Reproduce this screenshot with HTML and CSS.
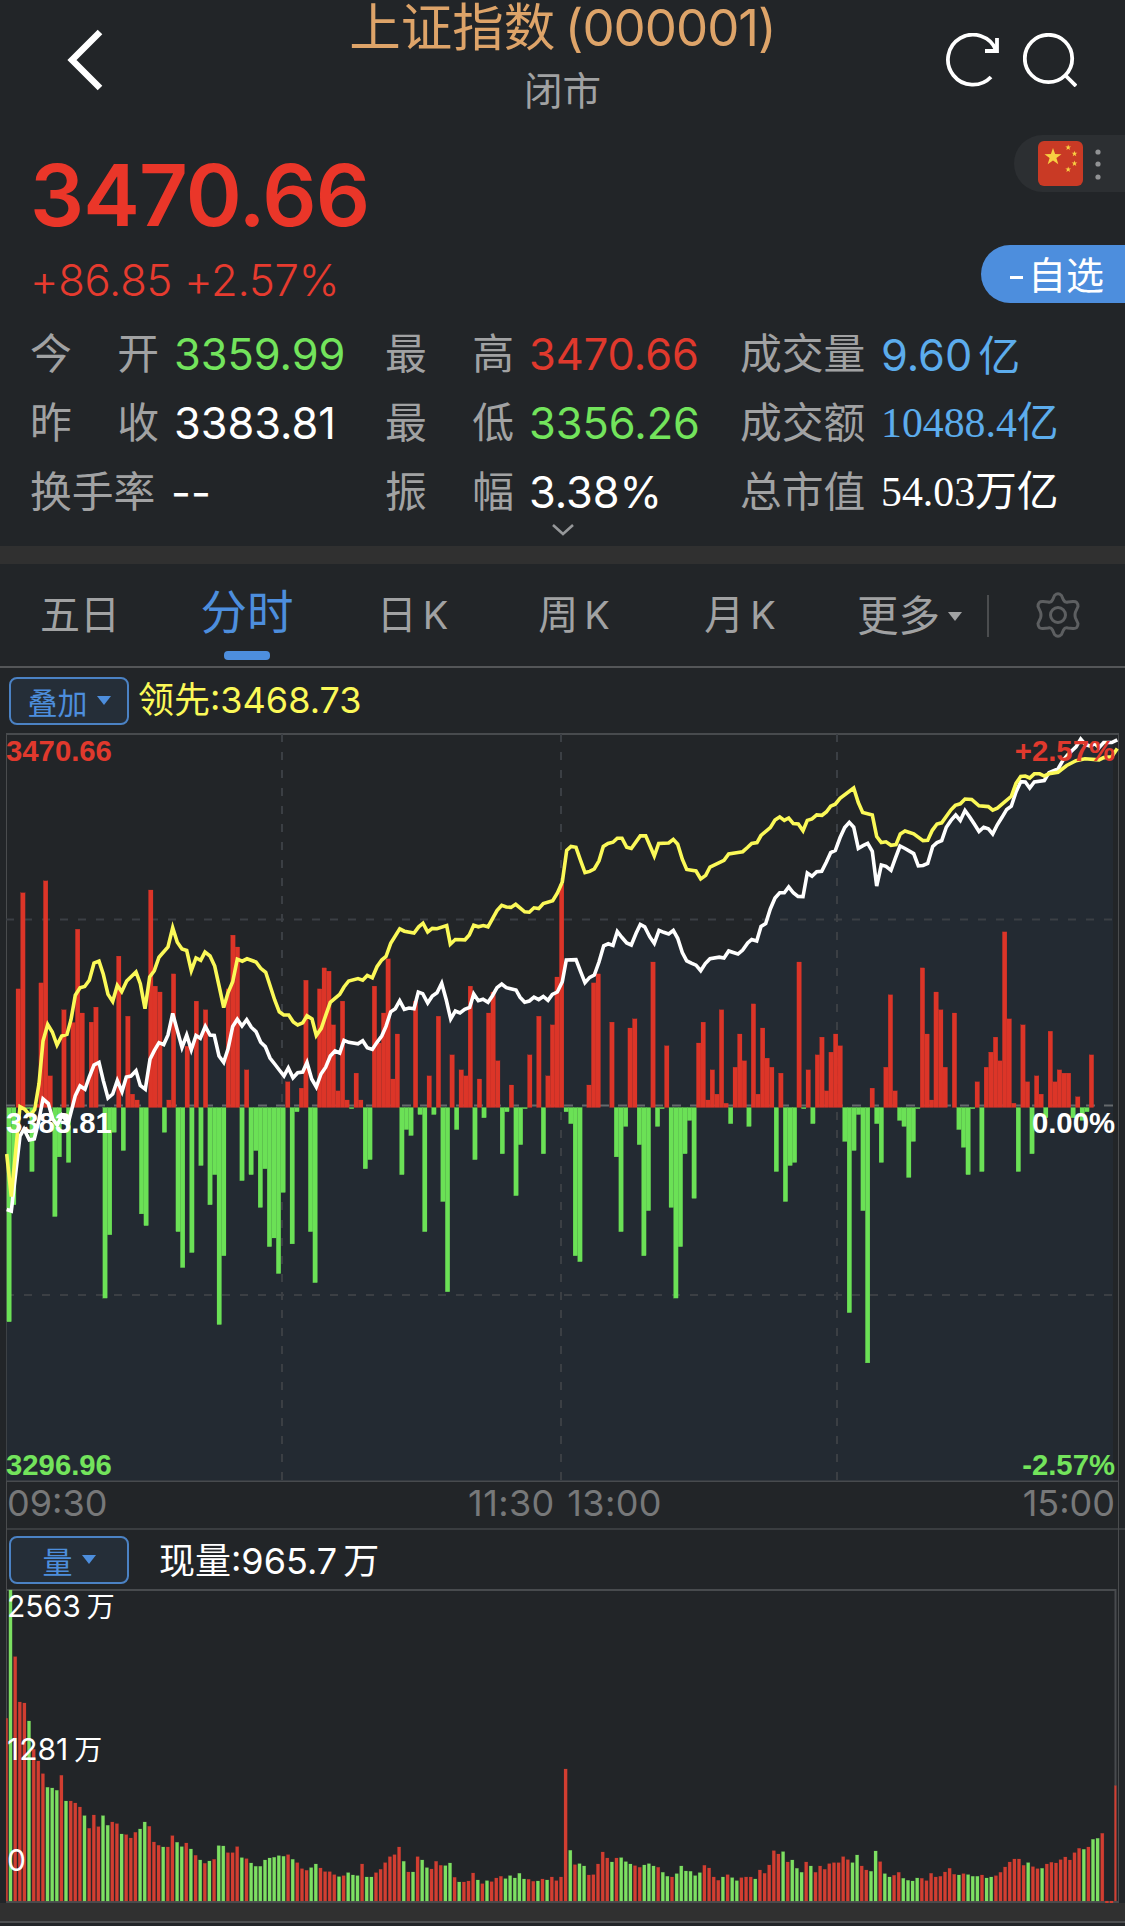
FILE: index.html
```html
<!DOCTYPE html>
<html lang="zh-CN">
<head>
    <meta charset="UTF-8">
    <meta name="viewport" content="width=device-width, initial-scale=1.0">
    <title>上证指数 (000001)</title>
    <link rel="stylesheet" href="styles.css">
</head>
<body>

    <header class="header">
        <svg class="back" width="38" height="62" viewBox="0 0 38 62"><path d="M34 3 L6 31 L34 59"/></svg>
        <div class="heading">
            <h1>上证指数 <span>(000001)</span></h1>
            <p>闭市</p>
        </div>
        <div class="header-icons">
            <svg width="54" height="54" viewBox="0 0 54 54"><path d="M46 44 A25 25 0 1 1 51 17"/><path d="M52 5 V18 H40"/></svg>
            <svg width="54" height="54" viewBox="0 0 54 54"><circle cx="25.5" cy="25.5" r="23.700"/><path d="M42.500 42.500 L53 53"/></svg>
        </div>
    </header>

    <section class="quote">
        <div class="quote-main">
            <div>
                <div class="price">3470.66</div>
                <div class="change">+86.85 +2.57%</div>
            </div>
            <div class="side">
                <div class="market">
                    <svg width="45" height="45" viewBox="0 0 45 45">
                        <rect width="45" height="45" rx="6" fill="#c93a25"/>
                        <g fill="#f8cf42">
                            <path id="star" d="M15 7 L17.100 13 L23.500 13.200 L18.400 17 L20.300 23.200 L15 19.500 L9.700 23.200 L11.600 17 L6.500 13.200 L12.900 13 Z"/>
                            <use href="#star" transform="translate(25.100 1) scale(.34)"/>
                            <use href="#star" transform="translate(31.400 7.300) scale(.34)"/>
                            <use href="#star" transform="translate(31.400 17) scale(.34)"/>
                            <use href="#star" transform="translate(25.100 23) scale(.34)"/>
                        </g>
                    </svg>
                    <svg class="dots" width="6" height="32" viewBox="0 0 6 32"><circle cx="3" cy="4" r="2.600"/><circle cx="3" cy="16" r="2.600"/><circle cx="3" cy="29" r="2.600"/></svg>
                </div>
                <div class="favorite"><i></i><span>自选</span></div>
            </div>
        </div>
        <div class="stats">
            <div class="stat"><label><b>今</b><b>开</b></label><span class="down">3359.99</span></div>
            <div class="stat"><label><b>最</b><b>高</b></label><span class="up">3470.66</span></div>
            <div class="stat"><label>成交量</label><span class="blue">9.60<em>亿</em></span></div>
            <div class="stat"><label><b>昨</b><b>收</b></label><span>3383.81</span></div>
            <div class="stat"><label><b>最</b><b>低</b></label><span class="down">3356.26</span></div>
            <div class="stat"><label>成交额</label><span class="blue serif">10488.4亿</span></div>
            <div class="stat"><label>换手率</label><span class="empty">--</span></div>
            <div class="stat"><label><b>振</b><b>幅</b></label><span>3.38%</span></div>
            <div class="stat"><label>总市值</label><span class="serif">54.03万亿</span></div>
        </div>
        <svg class="expand" width="24" height="14" viewBox="0 0 24 14"><path d="M2 2 L12 11 L22 2"/></svg>
    </section>

    <nav class="tabs">
        <a>五日</a>
        <a class="active">分时</a>
        <a class="day">日<span>K</span></a>
        <a>周<span>K</span></a>
        <a>月<span>K</span></a>
        <a class="more">更多<i class="caret"></i></a>
        <svg class="gear" width="46" height="46" viewBox="0 0 46 46">
            <path d="M19.500 3.500 Q23 0 26.500 3.500 L28.500 8 Q30 11 33 10 L38 9.500 Q43 9 43 14.500 L40.500 20 Q39.500 23 40.500 26 L43 31.500 Q43 37 38 36.500 L33 36 Q30 35 28.500 38 L26.500 42.500 Q23 46 19.500 42.500 L17.500 38 Q16 35 13 36 L8 36.500 Q3 37 3 31.500 L5.500 26 Q6.500 23 5.500 20 L3 14.500 Q3 9 8 9.500 L13 10 Q16 11 17.500 8 Z"/>
            <circle cx="23" cy="23" r="7.500"/>
        </svg>
    </nav>

    <div class="chart-bar">
        <button>叠加<i class="caret"></i></button>
        <span class="lead">领先:3468.73</span>
    </div>

    <div class="frame">
        <div class="price-chart">
            <svg id="price" width="1125" height="749" viewBox="0 13 1125 749"></svg>
            <span class="tag top up">3470.66</span>
            <span class="tag top right up">+2.57%</span>
            <span class="tag middle">3383.81</span>
            <span class="tag middle right">0.00%</span>
            <span class="tag bottom down">3296.96</span>
            <span class="tag bottom right down">-2.57%</span>
        </div>
        <div class="times"><span>09:30</span><span class="noon">11:30 13:00</span><span>15:00</span></div>
        <div class="chart-bar volume-bar">
            <button>量<i class="caret"></i></button>
            <span class="current">现量:965.7<em>万</em></span>
        </div>
        <div class="volume-chart">
            <svg id="volume" width="1125" height="314" viewBox="0 0 1125 314"></svg>
            <span class="scale high">2563<em>万</em></span>
            <span class="scale half">1281<em>万</em></span>
            <span class="scale zero">0</span>
        </div>
    </div>
    <footer></footer>

    <script>
        const RED = '#dc3528', GREEN = '#6be156';

        // Buying (+) and selling (-) strength for each minute
        const strength = [
            -542,-246,300,543,-3,-162,8,315,573,80,-276,-125,247,-139,215,451,239,0,216,254,
            0,-482,-322,-63,383,-109,231,34,19,-269,-299,550,307,292,-63,19,338,-314,-405,155,
            -367,269,-147,247,-246,-170,-549,-375,300,436,406,-185,95,-170,-109,-253,-155,-352,-330,-420,
            -215,65,-345,-11,49,322,-314,-443,300,353,345,209,42,269,19,-3,87,19,-155,-132,
            307,163,239,376,72,186,-170,-56,-71,269,-18,-314,80,-18,231,-238,-466,133,-56,95,
            80,307,-132,72,-26,239,292,118,-117,-11,57,-223,-94,-3,133,0,231,-117,80,209,
            330,565,-11,-41,-375,-390,0,57,315,338,0,0,216,-125,-314,-48,201,224,-94,-375,
            -261,368,-48,-3,156,-253,-482,-352,-117,-33,-230,163,216,19,95,34,247,11,-41,102,
            186,118,-48,262,34,201,125,102,-162,87,-238,-147,-139,368,-3,95,-41,133,178,42,
            140,186,156,-86,-519,-109,-18,-261,-646,49,-41,-139,102,285,42,-33,-48,-177,-86,-3,
            353,186,19,292,247,102,0,239,-56,-101,-170,-3,65,-162,102,140,178,118,444,224,
            11,-162,209,65,-117,80,34,-26,193,65,95,87,87,-26,27,-33,-11,133
        ];

        // Traded volume for each minute, negative when the price fell
        const volumes = [
            548,-933,733,597,594,-540,455,420,382,-341,-339,-332,377,-300,300,294,282,-256,218,258,
            223,-256,-227,237,232,-201,199,189,206,-216,-237,224,177,167,-162,162,196,-176,-163,174,
            -156,137,-123,113,-120,125,-166,-165,145,145,163,-130,127,-114,-104,-104,-123,-129,-131,-136,
            -134,139,-125,115,97,92,-100,-111,99,88,88,79,-73,76,-85,-78,-76,111,-72,-72,
            85,95,115,133,139,162,-119,87,-87,133,-123,-100,96,119,107,-106,-114,71,-57,57,
            60,84,-63,52,-61,58,69,74,-67,-76,-69,-83,-66,65,59,-60,66,-63,72,61,
            72,396,-152,109,-112,-105,78,79,111,147,129,-117,129,-130,-118,-111,106,101,-108,-112,
            -105,101,-86,-74,72,-82,-105,-90,-89,-76,-85,107,99,72,62,-72,79,-70,-61,70,
            72,72,-66,93,83,108,151,141,-148,117,-123,-98,-86,117,-105,86,105,95,112,115,
            115,133,124,-115,-138,105,93,-89,-150,118,-82,-72,77,86,-68,-62,-60,-69,68,61,
            83,72,74,87,98,80,-78,82,-79,-74,-74,78,-69,-72,76,86,102,117,126,126,
            107,-115,103,97,-98,111,116,114,124,132,123,145,158,-155,162,-185,-188,203,0,0,
            346
        ];

        const indexLine = '6.7,489.5 11.3,491 20,416 24,409 29.3,420 34.3,419 38.3,403 43,379 48.3,383.6 52.7,399 57.3,405 62,395.4 68.3,403 75.3,375.6 80,366 85,369.3 89.3,357 94,345 99,342.4 103.3,360.6 108,378 112.7,374 117.3,360.6 122,371.7 126.3,357 131,356 136,350.7 140.3,365.4 145.3,369.3 150,339.3 154.3,330.6 159,322.7 163.7,324.6 168,315 172.7,293.4 177.3,310.4 182,327.4 186.7,315 191.3,329.8 196,315.5 200.3,318.3 205.3,306.4 210,315 214.3,315.5 219,336 223.7,342.4 228,329 232.7,306.4 237.3,299.3 242,306 246.7,299.7 251.3,307.2 256,311.6 260.7,322.3 265.3,326.6 270,338 274.7,344 279.3,350 284,355.9 288.3,348 293,357.8 297.7,352.7 302.7,352 307,342.4 311.7,359 316.3,367 321,354 325.7,347.2 330.3,336 335,331 339.7,333 344,320.3 348.7,322.3 358,323.8 362.7,320.7 367.3,327.8 372.3,329.4 377,322.3 381.7,316 386,306.4 390.7,291.8 395.3,288.7 399.7,280.7 404.3,289.4 409,288 414,288.7 418.3,272 422.7,273.6 427.7,283 432.3,276 437,272.8 441.7,263.3 446.3,280 450.7,299 455.3,291 460,293 464.7,289.4 469.7,287.5 473.7,274 478.3,280.7 483,279.2 488,282.3 492.3,276 497,267.7 501.7,264 506.3,267.7 516,270 520,277.2 524.7,282.3 529.3,281 534,277.2 538.7,279.6 543.3,276.4 548,280.3 552.3,274.4 557.3,272 562.3,261.8 566.3,240 576,239.6 580.7,251.9 585,262.6 589.7,257.4 594.3,255 599,242 603.7,225.8 608.3,223.8 613,225.4 617.3,211.5 622,217.5 626.7,223 631.3,225 636,213.5 640.3,204.4 644.7,206.8 649.7,216.7 654.3,223.4 659,210.4 663.7,212.3 668.7,213.9 673.3,210.4 677.7,218.3 682.3,232.5 686.7,240.8 691.3,243.2 696,245.2 700.7,250.7 705.3,243.6 710,238.8 719.3,237.2 724,238 728.7,231 733.3,232.5 738,234 742.7,230 747.7,223 751.7,219.5 756.7,221 761,206.4 765.7,203.6 770.3,189 775,178 779.7,172.8 784.3,172.8 788.7,166.9 793.3,172.8 798,176.4 803,176.7 807.3,153 812,156.2 816.7,151.8 821.7,151.4 826.3,142.3 830.7,132.5 835.3,130.5 840,117.8 844.7,107.6 849.3,102.4 853.7,107.2 858.3,128.5 863,125.7 867.7,123.4 872.3,131.3 876.7,166 881.3,145 886,146.3 891,150.3 895.3,138.4 900,126 905,128.5 913.7,133.6 918.3,145.9 923,145.5 927.7,143.5 932.7,126.5 937,122.6 941.7,120.6 946.3,107.2 951,100.4 955.7,95 960.3,100.4 965,90.5 969.7,96.9 974.3,104 979,111.5 983.7,107.2 988.3,108.7 992.7,113.9 997.3,104.8 1002,97.3 1006.7,89.4 1011.3,86.2 1016,72 1020.7,61.7 1025.3,62 1029.7,68 1034.3,62 1044.3,60.5 1049,52.6 1053.7,50.6 1058,49 1062.7,40.7 1067.7,34.8 1076,26.9 1080.7,19 1085.3,24.5 1090,26 1095,23.7 1099,27.7 1103.7,22.5 1111.7,22.5 1117.3,19.8';

        const leadLine = '6.7,434 11.3,476.5 15.7,431 20,386.7 25,389.5 30,395.4 34.7,389.5 39,363.8 43,321 47.7,304.5 52.3,312 57,325 61.7,316 67,314.4 71,299.7 75.3,275.2 80,267.7 84.7,266.5 89.3,260.2 94,243.2 99,241.2 103.3,254.3 108,274.4 112.7,281.5 117.3,265.3 121.7,271.7 126.7,261 136,251.9 140.3,263.7 145,288.7 149.7,257 154.3,250.7 159,237.2 168,227 172.7,207.6 177.3,222.2 182,229 186.7,230.5 191.3,250.7 196,238 200.7,240.4 205,232.1 210,236 214.7,246 219.3,267 223.7,287.5 228,272.8 232.7,261.8 237.3,239.2 242.3,241.2 247,238.8 256,242 260.7,248.3 265.7,252.3 274.7,280 279.3,291.8 283.7,295 288.7,295 293.3,302 297.7,304.9 302.7,302.9 307,295.8 312,299 316.3,315.5 321.3,308.4 326,294.6 330.3,282.3 339.7,274.4 344,267 348.7,261 358,258.6 362.7,260.2 367.3,255.4 372.3,257.8 377,246.7 381.7,240 386,236.5 390.7,223.4 399.7,208.8 404.3,211.2 414,213 418.7,206.8 423,203.2 427.7,212 432.3,208.4 437,208.8 446.7,205.6 450.3,224.2 455.3,219.5 465,219.8 469.3,215 473.7,205.2 478.3,206.8 483.3,205.6 488,206.8 497,190.6 501.7,185.4 506.3,187 511,187.4 515.7,184.3 524.7,191.8 529.3,192.2 534,187.8 538.7,188.6 543.3,183.5 552.7,180.7 557.3,173.2 562.3,162 566.7,130.5 571,126.5 576,127.3 580.7,140.8 585,152.6 589.7,151.4 594.3,149 599,140.8 603.3,126.5 608,123.4 613,122.2 617.3,118.2 622,118.2 626.7,127.3 631.3,128.5 640.3,115.9 645.7,115.9 650.3,126.5 654.3,136 658.7,123.4 668.7,123 673.3,119.4 677.7,124.2 682.3,139.2 686.7,149.5 696,151 700.7,159 705.7,155.4 710,147 724,140.4 728.7,134 738,132.5 742.7,131.7 747.7,127.3 751.7,123.4 757,122.6 761,115.5 770.3,107.6 775,100 779.7,96.9 784.3,100.4 788.7,98 793.3,103.6 798.3,104 803,110.7 807.3,100.4 812,98.9 816.7,94.9 822,95.3 826.3,92 830.7,86.2 835.3,84.2 840,78.3 853.7,68 858.3,82.6 862.7,92.5 872.3,94.9 876.7,116.6 881.3,122.6 886,121.8 891,125.3 896,124.6 900.3,113.9 905,111 913.7,113.9 923,120.6 927.7,120.2 932.3,110.3 937,104 941.7,102.8 951,89.8 955.3,85.4 960.3,83.8 965,79 971.7,79.5 979,85.8 988.3,86.6 992.7,90.2 997.3,88.2 1011.3,76.3 1016,63.3 1020.7,56.5 1025.3,56 1029.7,58 1034.3,53.8 1039.7,53.8 1044.3,56 1049,53.8 1058,52.2 1066.7,45.5 1076,40.7 1085,38.8 1099,39.9 1103.7,37.6 1111.7,36.8 1117.3,28.5';

        function bar(x, y, width, height, color) {
            return `<rect x="${x.toFixed(1)}" y="${y.toFixed(1)}" width="${width}" height="${height.toFixed(1)}" fill="${color}" stroke="${color}"/>`;
        }

        function drawPrice() {
            const zero = 387.5;
            let out = `<polygon class="area" points="6.7,761 ${indexLine.replace(/ 1117.3,19.8$/, '')} 1113,22.5 1113,761"/>`;
            out += '<path class="border" d="M6 14 H1119 M6 761.500 H1119"/>';
            out += '<path class="grid" d="M6 199.500 H1113 M6 575 H1113 M282 14 V761 M561 14 V761 M837 14 V761"/>';
            out += '<path class="grid zero-line" d="M6 385.500 H1113"/><g class="strength">';
            strength.forEach((value, i) => {
                const height = Math.abs(value) / 2.529;
                const x = 6.9 + i * 4.5665;
                if (value) out += bar(x, value > 0 ? zero - height : zero, 4.5, height, value > 0 ? RED : GREEN);
            });
            out += `</g><polyline class="line" stroke="#fff" points="${indexLine}"/>`;
            out += `<polyline class="line" stroke="#fbf958" points="${leadLine}"/>`;
            document.getElementById('price').innerHTML = out;
        }

        function drawVolume() {
            const base = 312;
            let out = '<path class="border" d="M6 1 H1115.500 V313 M6 313 H1119"/><g class="volumes">';
            volumes.forEach((value, i) => {
                const height = Math.abs(value) / 3;
                let x = 4.3 + i * 4.626, width = 3.2;
                if (i === 0) { x = 6.2; width = 1.5; }
                if (i === 240) width = 1.8;
                out += value ? bar(x, base - height, width, height, value > 0 ? '#d23e31' : '#7de062')
                             : bar(x, base, width, 2, '#d23e31');
            });
            document.getElementById('volume').innerHTML = out + '</g>';
        }

        drawPrice();
        drawVolume();
    </script>

</body>
</html>
```
FILE: styles.css
```css
* {
    margin: 0;
    padding: 0;
    box-sizing: border-box;
}
body {
    width: 1125px;
    height: 1926px;
    overflow: hidden;
    background: #222528;
    color: #fff;
    font-family: Inter, "Noto Sans CJK SC", sans-serif;
}
svg {
    display: block;
    fill: none;
    flex: none;
}
em, i {
    font-style: normal;
}
.up { color: #e0392d; }
.down { color: #73e45c; }
.blue { color: #5cacec; }

.header {
    display: grid;
    grid-template-columns: 240px 1fr 240px;
    height: 120px;
}
.back {
    margin: 29px 0 0 66px;
    stroke: #fff;
    stroke-width: 6.5;
}
.heading {
    text-align: center;
    white-space: nowrap;
}
.heading h1 {
    height: 58px;
    line-height: 55px;
    font-size: 51.5px;
    font-weight: 400;
    color: #dea469;
}
.heading h1 span {
    font-size: 51px;
    letter-spacing: -1px;
    margin-left: -5px;
}
.heading p {
    font-size: 38.5px;
    line-height: 66px;
    color: #a1a2a3;
}
.header-icons {
    display: flex;
    gap: 24px;
    margin: 33px 0 0 60px;
    stroke: #fff;
    stroke-width: 3.8;
}

.quote {
    height: 426px;
}
.quote-main {
    display: flex;
    justify-content: space-between;
    height: 199px;
    padding-left: 30px;
}
.price {
    height: 130px;
    padding-top: 13px;
    line-height: 126px;
    font-size: 85px;
    font-weight: 600;
    letter-spacing: -0.9px;
    color: #ea3629;
}
.change {
    font-size: 43.5px;
    line-height: 61px;
    font-weight: 300;
    letter-spacing: -0.2px;
    color: #e63b2f;
}
.side {
    display: flex;
    flex-direction: column;
    align-items: flex-end;
    padding-top: 15px;
}
.market {
    display: flex;
    align-items: center;
    gap: 12px;
    width: 111px;
    height: 57px;
    padding-left: 24px;
    background: #2c2f32;
    border-radius: 29px 0 0 29px;
}
.dots {
    fill: #919395;
}
.favorite {
    display: flex;
    align-items: center;
    width: 144px;
    height: 58px;
    margin-top: 53px;
    padding-left: 29px;
    gap: 5px;
    font-size: 38px;
    background: #4d8edd;
    border-radius: 29px 0 0 29px;
}
.favorite span {
    padding-bottom: 4px;
}
.favorite i {
    width: 13px;
    height: 3px;
    margin-top: 6px;
    background: #fff;
}
.stats {
    display: grid;
    grid-template-columns: 355px 355px 1fr;
    grid-auto-rows: 69px;
    padding-left: 30px;
}
.stat {
    display: flex;
    align-items: center;
    font-size: 43.3px;
    white-space: nowrap;
}
.stat label {
    display: flex;
    justify-content: space-between;
    width: 129px;
    margin-right: 15px;
    padding-bottom: 5px;
    font-size: 41.8px;
    color: #a1a2a3;
}
.stat:nth-child(3n) label {
    margin-right: 12px;
}
.stat b {
    font-weight: 400;
}
.stat em {
    margin-left: 6px;
    font-size: 42px;
}
.stat .empty {
    margin-left: -3px;
}
.stat .blue {
    padding-bottom: 3px;
}
.stat .serif {
    padding-bottom: 8px;
    font-family: "Liberation Serif", "Noto Sans CJK SC", serif;
    font-size: 41.8px;
}
.expand {
    margin: -3px auto 0;
    stroke: #96989a;
    stroke-width: 2.6;
}

.tabs {
    display: flex;
    height: 122px;
    border-top: 18px solid #303030;
    border-bottom: 2px solid #545658;
    font-size: 40px;
    line-height: 101px;
    color: #a1a2a3;
    white-space: nowrap;
}
.tabs a {
    width: 166px;
    text-align: center;
}
.tabs a:first-child {
    width: 160px;
}
.tabs .day {
    width: 157px;
}
.tabs a span {
    margin-left: 6px;
    font-size: 38px;
}
.tabs .active {
    display: flex;
    flex-direction: column;
    align-items: center;
    width: 174px;
    font-size: 46.5px;
    line-height: 96px;
    color: #4d8edd;
}
.tabs .active::after {
    content: "";
    width: 46px;
    height: 9px;
    margin-top: -9px;
    border-radius: 4px;
    background: #4d8edd;
}
.tabs .more {
    display: flex;
    align-items: center;
    gap: 8px;
    width: 132px;
    height: 42px;
    margin: 31px 0 0 34px;
    border-right: 2px solid #4b4d4f;
    font-size: 41.5px;
}
.caret {
    border: 7px solid transparent;
    border-top: 9px solid;
    border-bottom: 0;
}
.gear {
    margin: 28px 0 0 46px;
    stroke: #5d5f61;
    stroke-width: 3;
}

.chart-bar {
    display: flex;
    align-items: center;
    height: 65px;
    padding-left: 9px;
    font-size: 36px;
    white-space: nowrap;
}
.chart-bar button {
    display: flex;
    align-items: center;
    justify-content: center;
    gap: 9px;
    width: 120px;
    height: 48px;
    border: 2px solid #4b82c4;
    border-radius: 8px;
    background: #252e38;
    font: 30px "Noto Sans CJK SC", sans-serif;
    color: #4d8edd;
}
.lead {
    margin-left: 9px;
    padding-bottom: 7px;
    color: #fbf958;
}
.frame {
    position: relative;
    height: 1170px;
}
.frame::before {
    content: "";
    position: absolute;
    left: 6px;
    right: 6px;
    top: 1px;
    bottom: 0;
    border: solid #4a4c4e;
    border-width: 0 1px;
}
.price-chart {
    position: relative;
    height: 749px;
}
.border {
    stroke: #484b4e;
    stroke-width: 2;
}
.area {
    fill: #232a32;
}
.grid {
    stroke: #3b3f44;
    stroke-width: 2;
    stroke-dasharray: 8 10;
}
.zero-line {
    stroke: #65696c;
    stroke-dasharray: 9 9;
}
.strength {
    stroke-width: 0.2;
}
.volumes {
    stroke-width: 0.6;
    stroke-opacity: 0.3;
}
.line {
    stroke-width: 3.6;
}
.tag {
    position: absolute;
    left: 6px;
    font: bold 29.3px/34px "Liberation Sans", sans-serif;
}
.tag.right {
    left: auto;
    right: 10px;
}
.tag.top { top: 1px; }
.tag.middle { top: 373px; }
.tag.bottom { bottom: 0; }
.times {
    display: flex;
    justify-content: space-between;
    height: 48px;
    margin-left: 7px;
    padding: 0 10px 0 0;
    border-bottom: 2px solid #3a3d40;
    font-size: 36px;
    line-height: 43px;
    color: #777879;
}
.noon {
    letter-spacing: 0.4px;
    word-spacing: 2px;
}
.volume-bar {
    height: 59px;
}
.current {
    margin-left: 30px;
    padding-bottom: 4px;
}
.current em, .scale em {
    margin-left: 6px;
}
.volume-chart {
    position: relative;
    height: 314px;
}
.scale {
    position: absolute;
    left: 7px;
    font-size: 30px;
    line-height: 36px;
}
.scale em {
    font-size: 28px;
}
.high { top: -1px; }
.half { top: 142px; }
.zero { top: 253px; }
footer {
    height: 20px;
    background: #303030;
    border-bottom: 2px solid #4e5052;
}
```
